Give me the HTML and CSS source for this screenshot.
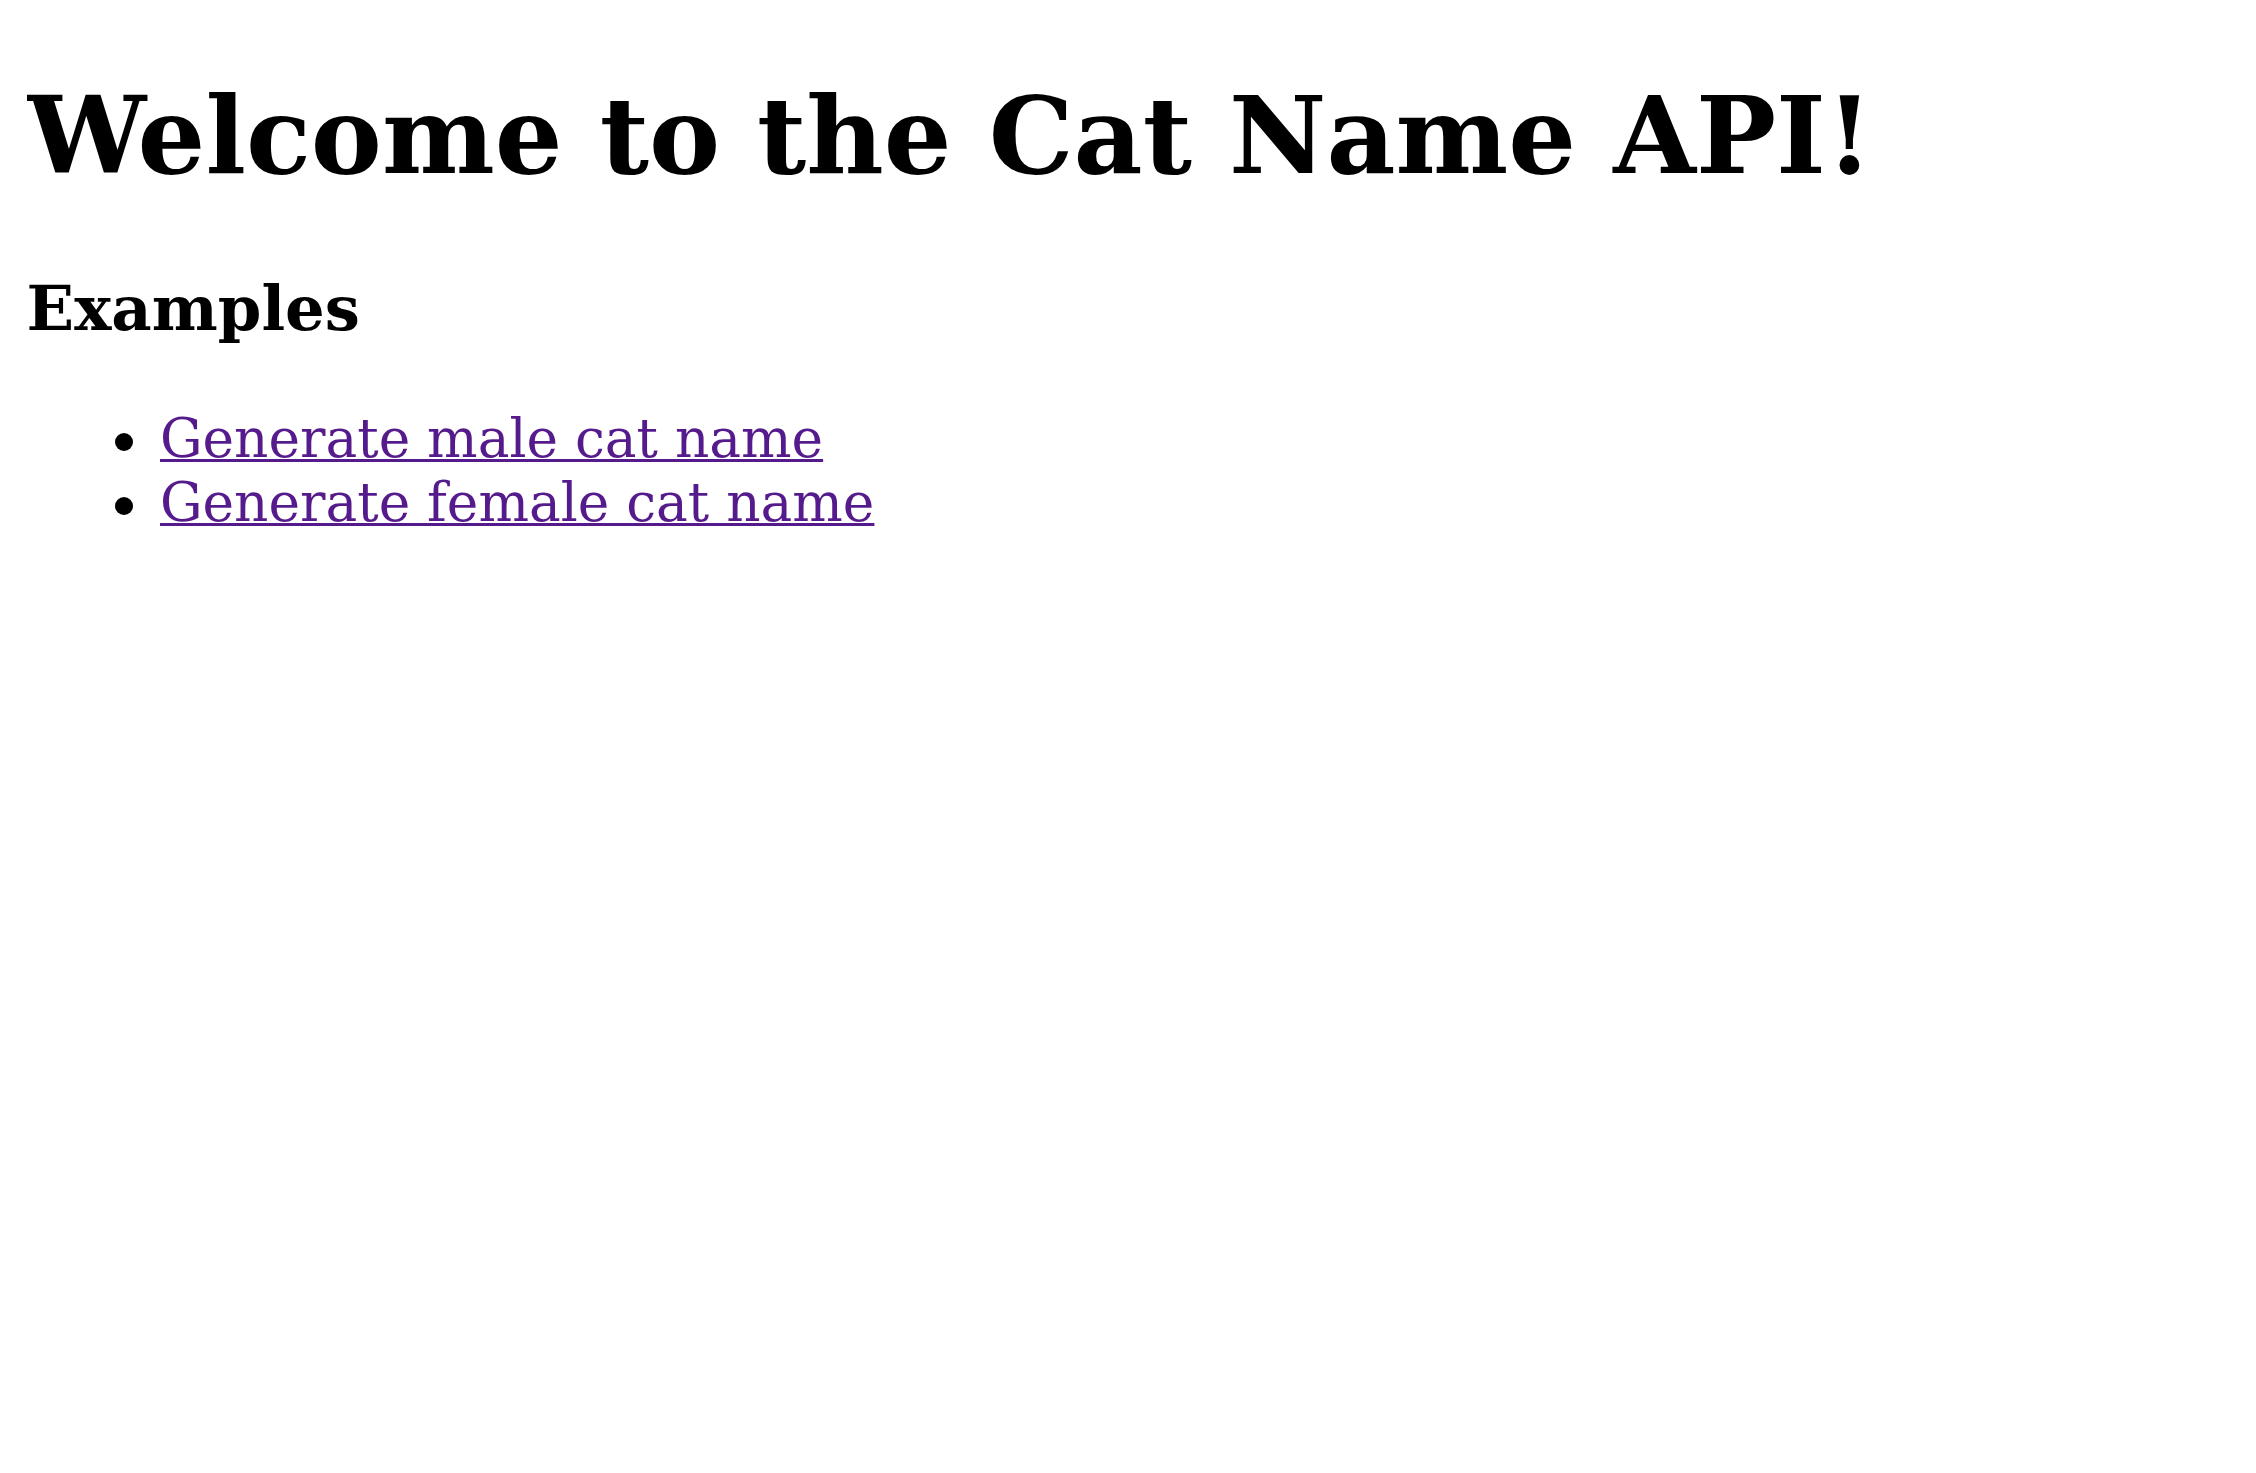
FILE: index.html
```html
<!DOCTYPE html>
<html>
<head>
<meta charset="utf-8">
<title>Cat Name API</title>
<link rel="stylesheet" href="styles.css">
</head>
<body class="page">
<h1 class="title">Welcome to the Cat Name API!</h1>
<h3 class="subtitle">Examples</h3>
<ul class="examples">
<li class="example"><a class="example-link" href="#male">Generate male cat name</a></li>
<li class="example"><a class="example-link" href="#female">Generate female cat name</a></li>
</ul>
</body>
</html>
```
FILE: styles.css
```css
html {
  background: #ffffff;
}
.page {
  margin: 26.6px;
  font-family: "DejaVu Serif", serif;
  font-size: 53.3px;
  line-height: 64px;
  color: #000000;
}
.title {
  font-size: 106.6px;
  line-height: 126px;
  font-weight: bold;
  margin: 46px 0 72.3px;
}
.subtitle {
  font-size: 62.4px;
  line-height: 74px;
  font-weight: bold;
  margin: 62px 0;
}
.examples {
  margin: 53.3px 0;
  padding-left: 133.4px;
  list-style: none;
}
.example::before {
  content: "";
  display: inline-block;
  width: 18px;
  height: 18px;
  border-radius: 50%;
  background: #000000;
  margin-left: -45px;
  margin-right: 27px;
  vertical-align: 6px;
}
.example-link {
  color: #551a8b;
  text-decoration: underline;
  text-decoration-thickness: 2.5px;
  text-underline-offset: 2px;
}
```
